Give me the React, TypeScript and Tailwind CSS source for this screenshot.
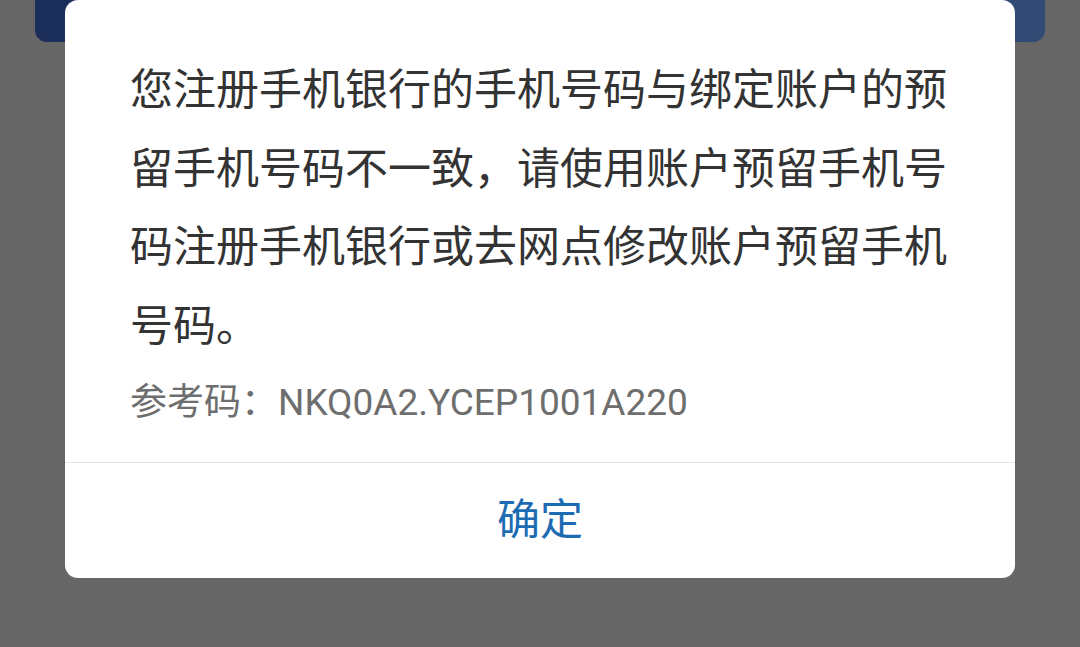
import React from "react";

export default function App() {
  const font = { fontFamily: 'Roboto, "Noto Sans CJK SC", sans-serif' };
  return (
    <div className="relative w-[1080px] h-[647px] overflow-hidden bg-[#666666]" style={font}>
      <div className="mx-[35px] h-[42px] rounded-b-[12px] bg-gradient-to-r from-[#1b2d59] to-[#304b74]" />
      <div className="absolute left-[65px] top-0 w-[950px] rounded-[13px] bg-white">
        <div className="px-[65px] pt-[51px] pb-[34px]">
          <p className="text-[43px] leading-[78.5px] text-[#333333]">
            您注册手机银行的手机号码与绑定账户的预留手机号码不一致，请使用账户预留手机号码注册手机银行或去网点修改账户预留手机号码。
          </p>
          <p className="mt-[13px] text-[37px] leading-[50px] text-[#6e6e6e]">参考码：NKQ0A2.YCEP1001A220</p>
        </div>
        <div className="h-px bg-[#e3e3e3]" />
        <div className="flex h-[115px] items-center justify-center text-[43px] text-[#1d6cb3]">确定</div>
      </div>
    </div>
  );
}
